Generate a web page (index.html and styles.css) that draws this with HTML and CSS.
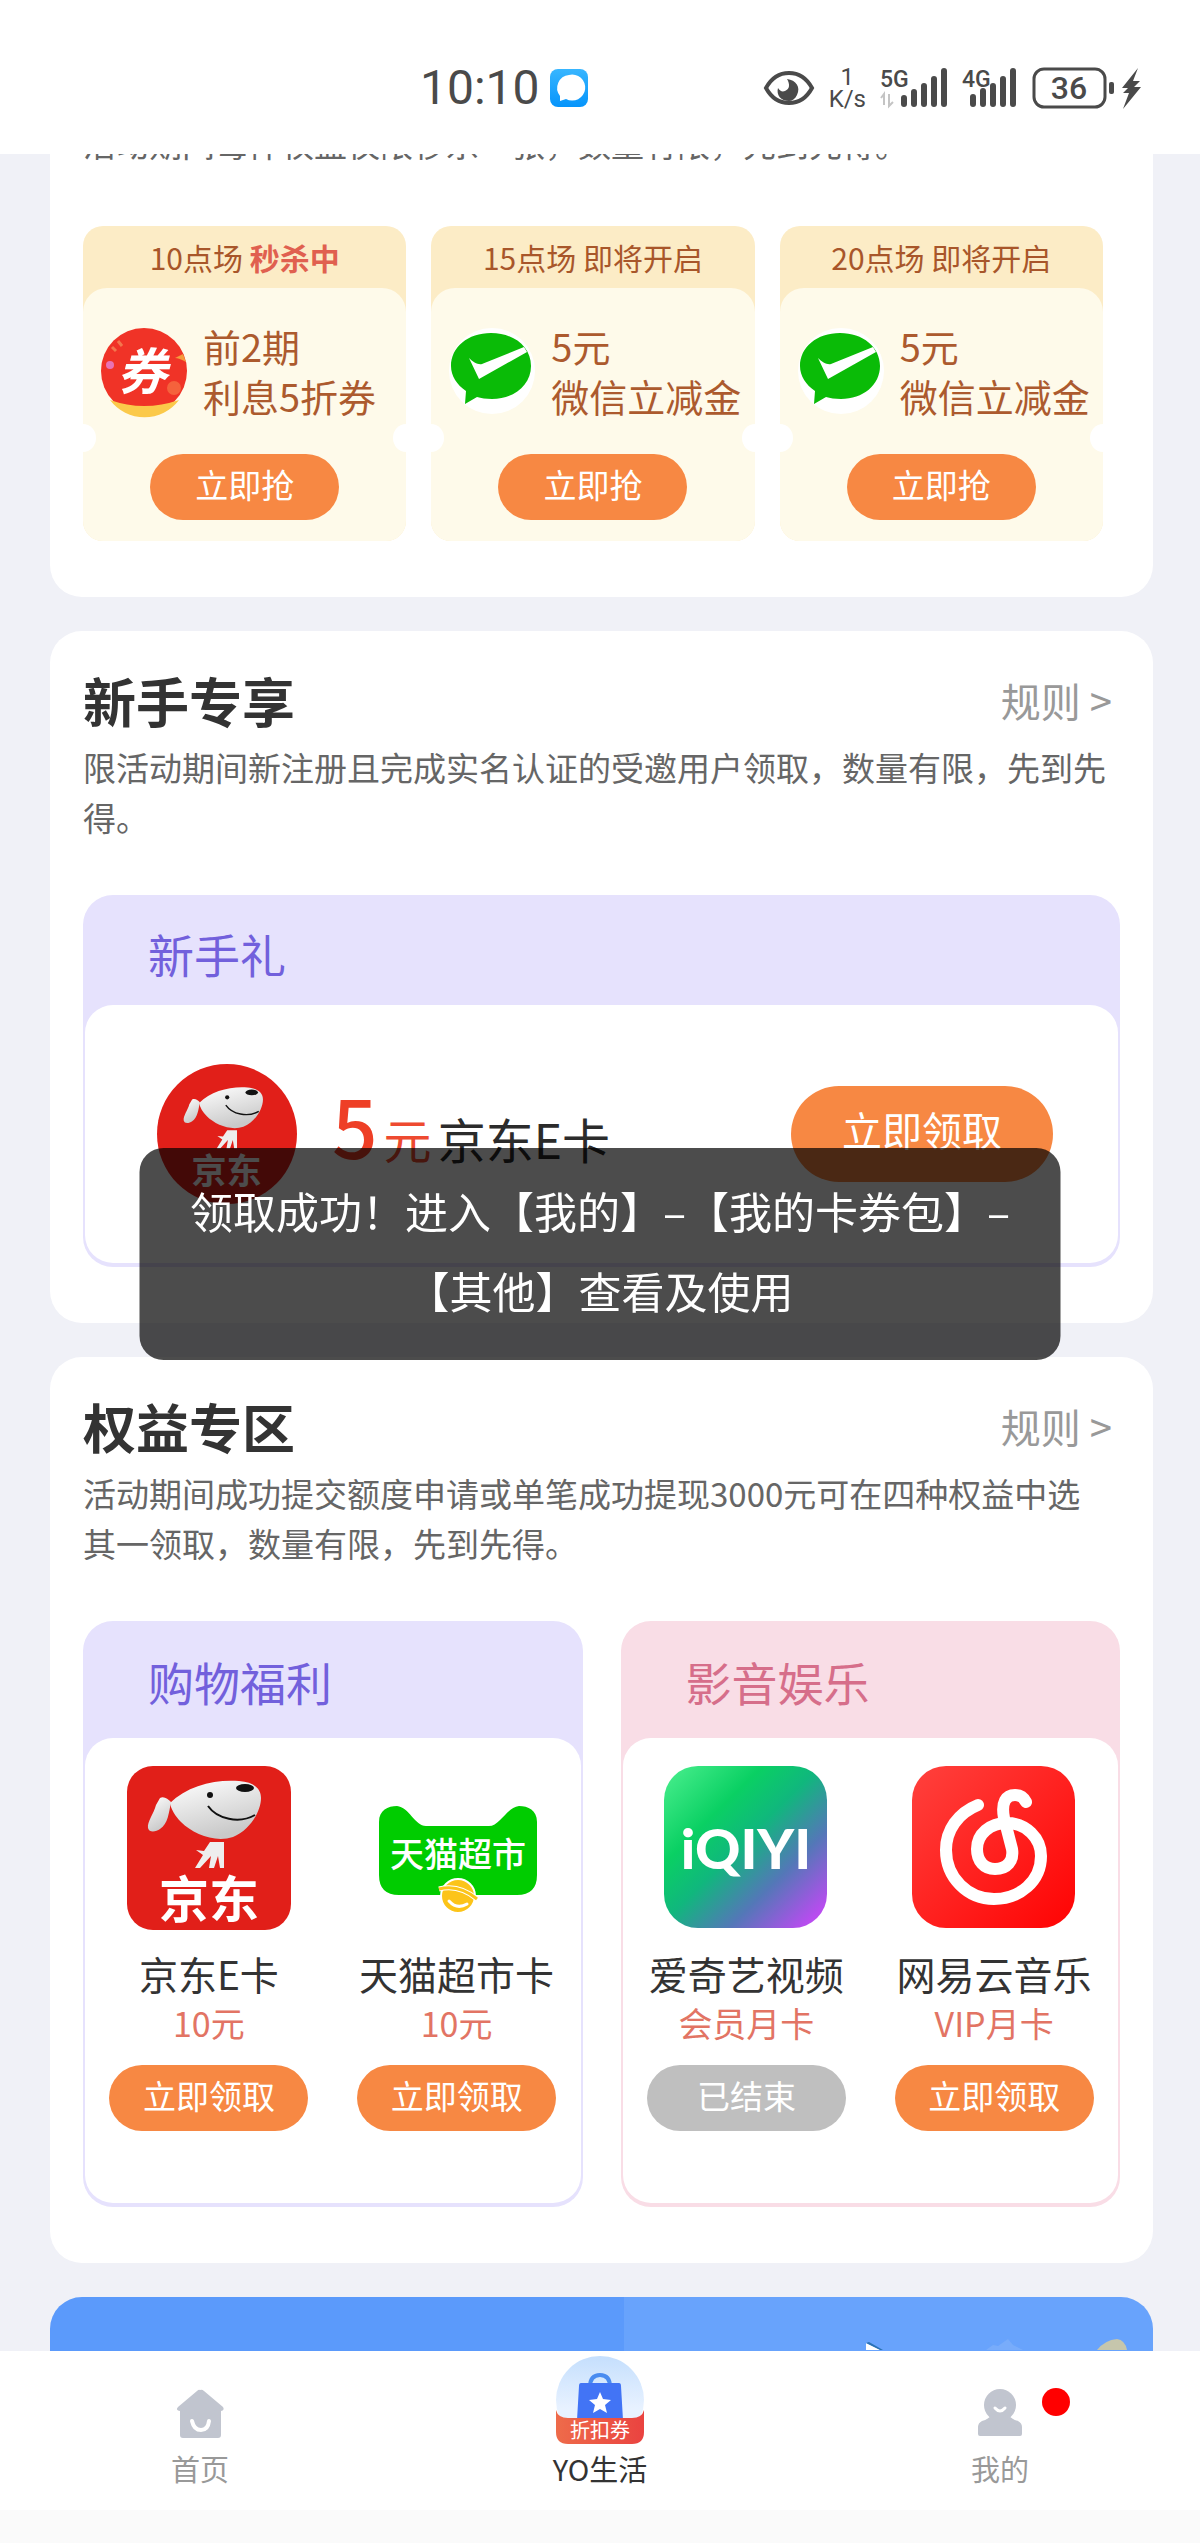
FILE: index.html
```
<!DOCTYPE html>
<html lang="zh-CN">
<head>
    <meta charset="UTF-8">
    <meta name="viewport" content="width=device-width, initial-scale=1.0">
    <title>YO生活</title>
    <link rel="stylesheet" href="styles.css">
</head>
<body>
    <!-- 共用图形 -->
    <svg class="defs" width="0" height="0" aria-hidden="true">
        <defs>
            <linearGradient id="dogGrad" x1="0" y1="0" x2="0.4" y2="1">
                <stop offset="0" stop-color="#ffffff"/>
                <stop offset="1" stop-color="#c9c9c9"/>
            </linearGradient>
            <linearGradient id="iqiyiGrad" x1="0" y1="0" x2="1" y2="1">
                <stop offset="0" stop-color="#4cf08f"/>
                <stop offset="0.3" stop-color="#0ad063"/>
                <stop offset="0.48" stop-color="#10b77d"/>
                <stop offset="0.7" stop-color="#5477b8"/>
                <stop offset="0.92" stop-color="#b64dee"/>
                <stop offset="1" stop-color="#c94bf5"/>
            </linearGradient>
            <linearGradient id="musicGrad" x1="0" y1="0" x2="1" y2="1">
                <stop offset="0" stop-color="#ff413d"/>
                <stop offset="1" stop-color="#ff0303"/>
            </linearGradient>
            <linearGradient id="appGrad" x1="0" y1="0" x2="0" y2="1">
                <stop offset="0" stop-color="#38b6ff"/>
                <stop offset="1" stop-color="#0594fb"/>
            </linearGradient>
            <linearGradient id="tabGrad" x1="0" y1="0" x2="0" y2="1">
                <stop offset="0" stop-color="#c5dffd"/>
                <stop offset="0.6" stop-color="#e8f2ff"/>
            </linearGradient>
            <linearGradient id="tabRed" x1="0" y1="0" x2="1" y2="0">
                <stop offset="0" stop-color="#ee6b4a"/>
                <stop offset="1" stop-color="#ea4340"/>
            </linearGradient>
            <symbol id="jd" viewBox="0 0 164 164">
                <path d="M33 32C37 30 41 33 44 36C42 46 41 58 33 63C29 66 22 67 21 62C20 56 27 47 29 39Z" fill="url(#dogGrad)"/>
                <path d="M43 37C60 20 88 13 112 15C126 16 134 22 134 32C134 46 122 65 106 71C88 77 66 68 54 56C48 50 44 43 43 37Z" fill="url(#dogGrad)"/>
                <ellipse cx="118" cy="22" rx="9" ry="4" fill="#111"/>
                <circle cx="83" cy="29" r="3" fill="#111"/>
                <path d="M81 40C90 53 112 58 128 49" fill="none" stroke="#111" stroke-width="2"/>
                <path d="M83 76H97V102H93L91 90L87 102H82L84 90L73 102H68L76 89L69 84L77 85Z" fill="#eee"/>
                <text x="82" y="152" font-size="50" font-weight="700" fill="#fff" text-anchor="middle">京东</text>
            </symbol>
            <symbol id="wxpay" viewBox="0 0 87 87">
                <circle cx="43" cy="43" r="43" fill="#fff"/>
                <path d="M42 5C65 5 82 19 82 38C82 57 65 71 43 71C37 71 32 70 28 69L16 76L17 63C8 57 2 48 2 38C2 19 19 5 42 5Z" fill="#0abb07"/>
                <path d="M20 30C24 34 29 37 33 36L75 19L78 24L30 51Z" fill="#fff"/>
            </symbol>
        </defs>
    </svg>

    <div class="page">
        <!-- 状态栏 -->
        <header class="status-bar">
            <div class="status-left">
                <span class="clock">10:10</span>
                <svg width="38" height="38" viewBox="0 0 38 38" aria-hidden="true">
                    <rect width="38" height="38" rx="8" fill="url(#appGrad)"/>
                    <path d="M19 6A13 13 0 1 1 16 30L10 32L10 27A13 13 0 0 1 19 6Z" fill="#fff"/>
                </svg>
            </div>
            <div class="status-right">
                <svg width="52" height="40" viewBox="0 0 52 40" aria-hidden="true">
                    <path d="M3 20C9 9 18 5 26 5S43 9 49 20C43 31 34 35 26 35S9 31 3 20Z" fill="none" stroke="#4a4a4a" stroke-width="4"/>
                    <path d="M24 11C33 12 38 19 34 27C32 31 29 33 26 33C18 33 13 27 15 20C17 23 19 24 22 23C27 21 27 16 24 11Z" fill="#4a4a4a"/>
                </svg>
                <div class="speed"><span>1</span><span>K/s</span></div>
                <svg width="68" height="42" viewBox="0 0 68 42" aria-hidden="true">
                    <text x="0" y="20" class="net">5G</text>
                    <path d="M4 38V27L1 31M9 27V39L13 35" fill="none" stroke="#c4c4c4" stroke-width="2"/>
                    <path d="M24 31V37M34 25V37M44 19V37M54 12V37M64 4V37" stroke="#4a4a4a" stroke-width="6" stroke-linecap="round"/>
                </svg>
                <svg width="56" height="42" viewBox="0 0 56 42" aria-hidden="true">
                    <text x="0" y="20" class="net">4G</text>
                    <path d="M11 30V37M21 24V37M31 19V37M41 12V37M51 4V37" stroke="#4a4a4a" stroke-width="6" stroke-linecap="round"/>
                </svg>
                <svg width="112" height="42" viewBox="0 0 112 42" aria-hidden="true">
                    <rect x="2" y="2" width="71" height="38" rx="10" fill="none" stroke="#4a4a4a" stroke-width="3"/>
                    <text x="37" y="32" class="battery">36</text>
                    <rect x="77" y="15" width="5" height="12" rx="2" fill="#4a4a4a"/>
                    <path d="M106 1L90 21H96L91 26H97L91 42L109 20H102L108 14H101Z" fill="#4a4a4a"/>
                </svg>
            </div>
        </header>

        <main class="content">
            <!-- 秒杀 -->
            <section class="card card-seckill">
                <p class="desc">活动期间每件权益仅限秒杀一张，数量有限，先到先得。</p>
                <div class="coupons">
                    <article class="coupon">
                        <h3 class="coupon-time">10点场 <strong>秒杀中</strong></h3>
                        <div class="coupon-body">
                            <div class="coupon-info">
                                <svg width="87" height="87" viewBox="0 0 87 87" aria-hidden="true">
                                    <circle cx="43" cy="43" r="43" fill="#f03327"/>
                                    <path d="M9 72Q43 84 78 72A43 43 0 0 1 9 72Z" fill="#fbc94a"/>
                                    <path d="M74 30L82 26L85 34Q78 30 74 30Z" fill="#f59a3c"/>
                                    <circle cx="9" cy="37" r="4" fill="#e873b4"/>
                                    <path d="M17 13L21 18M11 19L15 23" stroke="#f3764d" stroke-width="3"/>
                                    <circle cx="73" cy="60" r="7" fill="#f5623c"/>
                                    <text x="41" y="62" class="quan">券</text>
                                </svg>
                                <p>前2期<br>利息5折券</p>
                            </div>
                            <button type="button" class="btn btn-grab">立即抢</button>
                        </div>
                    </article>
                    <article class="coupon">
                        <h3 class="coupon-time">15点场 即将开启</h3>
                        <div class="coupon-body">
                            <div class="coupon-info">
                                <svg width="87" height="87" aria-hidden="true"><use href="#wxpay"/></svg>
                                <p>5元<br>微信立减金</p>
                            </div>
                            <button type="button" class="btn btn-grab">立即抢</button>
                        </div>
                    </article>
                    <article class="coupon">
                        <h3 class="coupon-time">20点场 即将开启</h3>
                        <div class="coupon-body">
                            <div class="coupon-info">
                                <svg width="87" height="87" aria-hidden="true"><use href="#wxpay"/></svg>
                                <p>5元<br>微信立减金</p>
                            </div>
                            <button type="button" class="btn btn-grab">立即抢</button>
                        </div>
                    </article>
                </div>
            </section>

            <!-- 新手专享 -->
            <section class="card">
                <div class="card-head">
                    <h2>新手专享</h2>
                    <a href="#" class="rules">规则 &gt;</a>
                </div>
                <p class="desc">限活动期间新注册且完成实名认证的受邀用户领取，数量有限，先到先得。</p>
                <div class="gift">
                    <h3>新手礼</h3>
                    <div class="gift-body gift-row">
                        <svg width="141" height="141" viewBox="0 0 141 141" aria-hidden="true">
                            <circle cx="70" cy="70" r="70" fill="#e11f19"/>
                            <use href="#jd" x="12" y="13" width="115" height="115"/>
                        </svg>
                        <p class="amount"><b>5</b><em>元</em>京东E卡</p>
                        <button type="button" class="btn btn-large">立即领取</button>
                    </div>
                </div>
            </section>

            <!-- 权益专区 -->
            <section class="card">
                <div class="card-head">
                    <h2>权益专区</h2>
                    <a href="#" class="rules">规则 &gt;</a>
                </div>
                <p class="desc">活动期间成功提交额度申请或单笔成功提现3000元可在四种权益中选其一领取，数量有限，先到先得。</p>
                <div class="gift-pair">
                    <div class="gift gift-tall">
                        <h3>购物福利</h3>
                        <div class="gift-body gift-items">
                            <div class="item">
                                <svg width="164" height="164" viewBox="0 0 164 164" aria-hidden="true">
                                    <rect width="164" height="164" rx="26" fill="#e11f19"/>
                                    <use href="#jd" width="164" height="164"/>
                                </svg>
                                <h4>京东E卡</h4>
                                <p>10元</p>
                                <button type="button" class="btn btn-small">立即领取</button>
                            </div>
                            <div class="item">
                                <svg width="164" height="164" viewBox="-4 -40 164 164" aria-hidden="true">
                                    <path d="M0 16C0 4 9 0 18 0C30 1 36 20 47 20H110C121 20 128 1 140 0C149 0 158 4 158 16V69Q158 89 138 89H20Q0 89 0 69Z" fill="#0c0"/>
                                    <text x="79" y="61" font-size="34" font-weight="500" fill="#fff" text-anchor="middle">天猫超市</text>
                                    <circle cx="79" cy="90" r="17" fill="#fcc419" stroke="#fff" stroke-width="2"/>
                                    <path d="M60 83Q80 78 98 93" fill="none" stroke="#fff" stroke-width="5"/>
                                    <path d="M60 83Q80 78 98 93" fill="none" stroke="#fcc419" stroke-width="3"/>
                                    <path d="M70 95Q78 104 88 98" fill="none" stroke="#fff" stroke-width="3" stroke-linecap="round"/>
                                </svg>
                                <h4>天猫超市卡</h4>
                                <p>10元</p>
                                <button type="button" class="btn btn-small">立即领取</button>
                            </div>
                        </div>
                    </div>
                    <div class="gift gift-tall gift-pink">
                        <h3>影音娱乐</h3>
                        <div class="gift-body gift-items">
                            <div class="item">
                                <svg width="164" height="164" viewBox="0 0 164 164" aria-hidden="true">
                                    <rect width="163" height="162" rx="34" fill="url(#iqiyiGrad)"/>
                                    <text x="82" y="103" class="iqiyi">iQIYI</text>
                                </svg>
                                <h4>爱奇艺视频</h4>
                                <p>会员月卡</p>
                                <button type="button" class="btn btn-small" disabled>已结束</button>
                            </div>
                            <div class="item">
                                <svg width="164" height="164" viewBox="0 0 164 164" aria-hidden="true">
                                    <rect width="163" height="162" rx="34" fill="url(#musicGrad)"/>
                                    <path d="M66 39C46 47 34 64 34 84C34 112 56 133 82 133C108 133 129 115 129 90C129 72 114 57 95 57C78 57 65 68 65 83C65 95 72 103 83 103C95 103 102 95 100 83L92 52C89 36 94 29 103 29C108 29 112 32 114 36" fill="none" stroke="#fff" stroke-width="12" stroke-linecap="round"/>
                                </svg>
                                <h4>网易云音乐</h4>
                                <p>VIP月卡</p>
                                <button type="button" class="btn btn-small">立即领取</button>
                            </div>
                        </div>
                    </div>
                </div>
            </section>

            <!-- 横幅 -->
            <section class="banner">
                <svg width="310" height="53" viewBox="0 0 310 53" aria-hidden="true">
                    <path d="M23 46L38 53H23Z" fill="#fff"/>
                    <path d="M23 46L26 45L40 53H37Z" fill="#2a72b5"/>
                    <path d="M143 53L150 48L155 49L165 42L170 48L180 53Z" fill="#78acfb"/>
                    <path d="M254 53Q262 43 274 42Q282 43 284 53Z" fill="#c6c6ac"/>
                </svg>
            </section>
        </main>

        <!-- 底部导航 -->
        <nav class="tab-bar">
            <a href="#" class="tab">
                <svg width="89" height="89" viewBox="0 0 89 89" aria-hidden="true">
                    <path d="M44 34Q46 33 48 35L67 51Q69 54 65 55V79Q65 82 62 82H27Q24 82 24 79V55Q19 54 22 51L41 35Q43 33 44 34Z" fill="#c1c5cf"/>
                    <path d="M36 65Q38 74 45 74T53 65" fill="none" stroke="#fff" stroke-width="4" stroke-linecap="round"/>
                </svg>
                <span>首页</span>
            </a>
            <a href="#" class="tab active">
                <svg width="89" height="89" viewBox="0 0 89 89" aria-hidden="true">
                    <circle cx="44" cy="44" r="44" fill="url(#tabGrad)"/>
                    <path d="M34 31Q34 19 44 19T54 31" fill="none" stroke="#4a8cf0" stroke-width="4"/>
                    <path d="M25 27H63Q65 27 65 30L67 64H21L23 30Q23 27 25 27Z" fill="#4274f5"/>
                    <path d="M44 36L47 43L55 44L49 49L51 57L44 53L37 57L39 49L33 44L41 43Z" fill="#fff"/>
                    <path d="M0 54Q2 62 12 62H76Q86 62 88 54V76Q88 88 76 88H12Q0 88 0 76Z" fill="url(#tabRed)"/>
                    <text x="44" y="82" font-size="20" fill="#fff" text-anchor="middle">折扣券</text>
                </svg>
                <span>YO生活</span>
            </a>
            <a href="#" class="tab">
                <svg width="89" height="89" viewBox="0 0 89 89" aria-hidden="true">
                    <circle cx="44" cy="49" r="16" fill="#c1c5cf"/>
                    <path d="M35 59H53Q55 63 62 65Q66 67 66 71V78Q66 80 64 80H24Q22 80 22 78V71Q22 67 26 65Q33 63 35 59Z" fill="#c1c5cf"/>
                    <path d="M39 52Q44 58 49 52" fill="none" stroke="#fff" stroke-width="3" stroke-linecap="round"/>
                </svg>
                <span>我的</span>
                <i class="dot"></i>
            </a>
        </nav>
        <div class="home-strip"></div>
    </div>

    <!-- 提示 -->
    <div class="toast" role="status">领取成功！进入【我的】–【我的卡券包】–<br>【其他】查看及使用</div>
</body>
</html>
```
FILE: styles.css
```
/* 全局 */
* {
    box-sizing: border-box;
}

body {
    margin: 0;
    background: #f0f1f7;
    color: #333;
    font-family: "Noto Sans CJK SC", "Noto Sans", sans-serif;
}

h2, h3, h4, p {
    margin: 0;
    font-weight: 400;
}

a {
    color: inherit;
    text-decoration: none;
}

svg {
    display: block;
    flex: none;
    overflow: visible;
}

.defs {
    position: absolute;
}

.page {
    display: flex;
    flex-direction: column;
    height: 100vh;
}

/* 状态栏 */
.status-bar {
    flex: none;
    display: flex;
    align-items: center;
    justify-content: space-between;
    height: 154px;
    padding: 22px 56px 0 35%;
    background: #fff;
    color: #4a4a4a;
    position: relative;
    z-index: 2;
}

.status-left,
.status-right {
    display: flex;
    align-items: center;
}

.status-left {
    gap: 10px;
}

.status-right {
    gap: 14px;
}

.clock {
    font: 400 48px/56px Roboto, sans-serif;
}

.speed {
    display: flex;
    flex-direction: column;
    align-items: center;
    font: 400 24px/22px Roboto, sans-serif;
}

.net {
    font: 500 23px Roboto, sans-serif;
    fill: #4a4a4a;
}

.battery {
    font: 500 32px Roboto, sans-serif;
    fill: #4a4a4a;
    text-anchor: middle;
}

/* 内容区 */
.content {
    flex: 1;
    min-height: 0;
    overflow: hidden;
    padding: 0 47px 0 50px;
}

.card {
    margin-bottom: 34px;
    padding: 32px 33px 56px;
    background: #fff;
    border-radius: 32px;
}

.card-seckill {
    margin-top: -68px;
}

.card-seckill .desc {
    margin-bottom: 58px;
}

.card-head {
    display: flex;
    align-items: center;
    justify-content: space-between;
    height: 79px;
    padding: 0 8px 6px 0;
}

.card-head h2 {
    font-size: 53px;
    font-weight: 700;
}

.rules {
    color: #999;
    font-size: 40px;
}

.desc {
    margin-bottom: 53px;
    padding-right: 10px;
    color: #666;
    font-size: 33px;
    line-height: 50px;
}

/* 按钮 */
.btn {
    display: block;
    height: 66px;
    padding: 0 0 6px;
    border: 0;
    border-radius: 48px;
    background: #f78843;
    color: #fff;
    font-family: inherit;
    font-size: 33px;
    cursor: pointer;
}

.btn:disabled {
    background: #bfbfbf;
    cursor: default;
}

.btn-grab {
    width: 189px;
}

.btn-small {
    width: 199px;
}

.btn-large {
    width: 262px;
    height: 96px;
    padding-bottom: 10px;
    font-size: 40px;
}

/* 秒杀券 */
.coupons {
    display: grid;
    grid-template-columns: repeat(3, 1fr);
    gap: 25px;
    padding-right: 17px;
}

.coupon {
    position: relative;
    overflow: hidden;
    border-radius: 20px;
    background: #fcecc6;
}

.coupon::before,
.coupon::after {
    content: "";
    position: absolute;
    top: 198px;
    width: 26px;
    height: 28px;
    border-radius: 50%;
    background: #fff;
}

.coupon::before {
    left: -13px;
}

.coupon::after {
    right: -13px;
}

.coupon-time {
    color: #a8562a;
    font-size: 30px;
    line-height: 62px;
    text-align: center;
}

.coupon-time strong {
    color: #e0604f;
}

.coupon-body {
    display: flex;
    flex-direction: column;
    align-items: center;
    gap: 33px;
    padding: 33px 0 21px;
    border-radius: 24px 24px 0 0;
    background: #fefaea;
}

.coupon-info {
    display: flex;
    align-items: center;
    align-self: stretch;
    gap: 15px;
    padding-left: 18px;
    color: #ac5a2e;
    font-size: 38px;
    line-height: 50px;
    white-space: nowrap;
}

.quan {
    font-size: 50px;
    font-weight: 700;
    font-style: italic;
    fill: #fff;
    text-anchor: middle;
}

/* 礼包 */
.gift {
    padding: 0 2px 4px;
    border-radius: 30px;
    background: #e6e2fd;
    color: #7260dc;
}

.gift h3 {
    padding: 6px 0 0 63px;
    font-size: 46px;
    line-height: 104px;
    height: 110px;
}

.gift-tall h3 {
    height: 117px;
    padding-top: 8px;
}

.gift-pink {
    background: #f9dde6;
    color: #d66e8a;
}

.gift-body {
    border-radius: 28px;
    background: #fff;
}

.gift-row {
    display: flex;
    align-items: center;
    height: 258px;
    padding: 0 65px 0 72px;
}

.amount {
    flex: 1;
    padding: 0 0 20px 34px;
    color: #2b2b2b;
    font-size: 48px;
}

.amount b {
    margin-right: 6px;
    color: #ee3f26;
    font-size: 80px;
    font-weight: 500;
}

.amount em {
    margin-right: 6px;
    color: #ee4a30;
    font-style: normal;
}

.gift-pair {
    display: grid;
    grid-template-columns: 1fr 1fr;
    gap: 38px;
}

.gift-items {
    display: grid;
    grid-template-columns: 1fr 1fr;
    padding: 28px 0 72px;
}

.item {
    display: flex;
    flex-direction: column;
    align-items: center;
}

.item h4 {
    margin-top: 18px;
    color: #333;
    font-size: 39px;
    line-height: 50px;
}

.item p {
    margin-bottom: 17px;
    color: #e27464;
    font-size: 34px;
    line-height: 50px;
}

.iqiyi {
    font: 900 56px Lato, sans-serif;
    fill: #fff;
    text-anchor: middle;
}

/* 横幅 */
.banner {
    display: flex;
    justify-content: flex-end;
    height: 300px;
    border-radius: 32px;
    background: linear-gradient(90deg, #5b9afb 52%, #68a3fc 52%);
}

/* 底部导航 */
.tab-bar {
    flex: none;
    display: grid;
    grid-template-columns: repeat(3, 1fr);
    height: 159px;
    background: #fff;
}

.tab {
    position: relative;
    display: flex;
    flex-direction: column;
    align-items: center;
    padding-top: 5px;
    color: #999;
    font-size: 29px;
    line-height: 46px;
}

.tab.active {
    color: #333;
}

.dot {
    position: absolute;
    top: 37px;
    left: calc(50% + 42px);
    width: 28px;
    height: 28px;
    border-radius: 50%;
    background: #f00;
}

.home-strip {
    flex: none;
    height: 33px;
    background: #fafafa;
}

/* 提示 */
.toast {
    position: fixed;
    top: 1148px;
    left: 50%;
    z-index: 10;
    width: 921px;
    padding: 22px 0 30px;
    border-radius: 24px;
    background: rgba(0, 0, 0, 0.7);
    color: #fff;
    font-size: 43px;
    line-height: 80px;
    text-align: center;
    white-space: nowrap;
    transform: translateX(-50%);
}
```
